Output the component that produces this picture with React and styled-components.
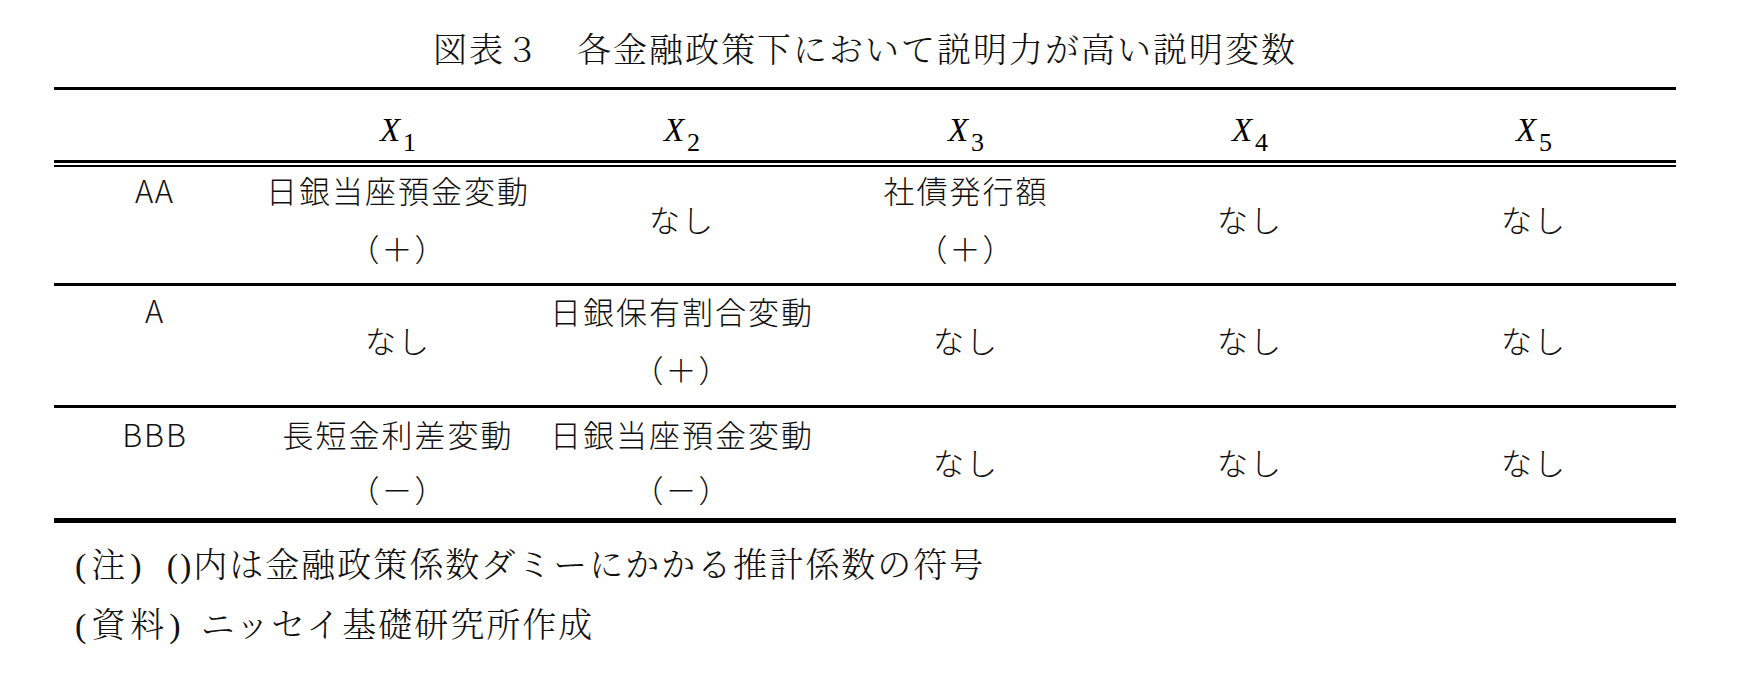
import React from "react";
import styled, { createGlobalStyle } from "styled-components";

const GlobalStyle = createGlobalStyle`
  html, body {
    margin: 0;
    padding: 0;
    background: #fff;
  }
  body {
    color: #111;
    font-family: "Noto Sans CJK JP", "Noto Sans", sans-serif;
  }
`;

const Page = styled.div`
  width: 1622px;
  padding: 28px 0 0 54px;
`;

const serif = `"Liberation Serif", "Noto Serif CJK JP", "Noto Sans CJK JP", serif`;

const Title = styled.h1`
  margin: 0 0 13px;
  font-family: ${serif};
  font-size: 34px;
  font-weight: 300;
  line-height: 46px;
  letter-spacing: 2px;
  text-align: center;
`;

const Table = styled.div`
  border-top: 3px solid #000;
  border-bottom: 5px solid #000;
`;

const Grid = styled.div`
  display: grid;
  grid-template-columns: 202px repeat(5, 284px);
`;

const HeaderRow = styled(Grid)`
  height: 70px;
  border-bottom: 3px solid #000;
`;

const HeaderCell = styled.div`
  display: flex;
  align-items: center;
  justify-content: center;
  padding-top: 9px;
`;

const Var = styled.span`
  font-family: "Liberation Serif", "DejaVu Serif", serif;
  font-size: 33px;
  font-style: italic;
  line-height: 50px;
  color: #000;
`;

const Sub = styled.sub`
  margin-left: 3px;
  font-size: 26px;
  font-style: normal;
  line-height: 0;
  vertical-align: -10px;
`;

const Body = styled.div`
  margin-top: 2px;
  border-top: 2px solid #000;
`;

const Row = styled(Grid)`
  grid-template-rows: ${(p) => p.$h}px;
  line-height: ${(p) => p.$line}px;
  font-size: 31px;
  font-weight: 300;
  letter-spacing: 2px;
  & + & {
    border-top: 3px solid #000;
  }
`;

const Label = styled.div`
  align-self: start;
  margin-top: ${(p) => -p.$shift / 2}px;
  text-align: center;
`;

const Cell = styled.div`
  display: flex;
  flex-direction: column;
  align-items: center;
  justify-content: center;
  min-height: 0;
  padding-bottom: ${(p) => p.$shift}px;
  white-space: nowrap;
`;

const Notes = styled.div`
  margin-top: 13px;
  padding-left: 21px;
  font-family: ${serif};
  font-size: 34px;
  font-weight: 300;
  line-height: 60px;
  letter-spacing: 2px;
`;

const NoteLine = styled.div`
  display: flex;
`;

const NoteTag = styled.span`
  margin-right: ${(p) => p.$gap}px;
  letter-spacing: 5px;
`;

const headers = [1, 2, 3, 4, 5];

const rows = [
  {
    label: "AA",
    h: 116,
    line: 58,
    shift: 12,
    cells: [["日銀当座預金変動", "（＋）"], ["なし"], ["社債発行額", "（＋）"], ["なし"], ["なし"]],
  },
  {
    label: "A",
    h: 119,
    line: 58,
    shift: 11,
    cells: [["なし"], ["日銀保有割合変動", "（＋）"], ["なし"], ["なし"], ["なし"]],
  },
  {
    label: "BBB",
    h: 110,
    line: 55,
    shift: 4,
    cells: [["長短金利差変動", "（－）"], ["日銀当座預金変動", "（－）"], ["なし"], ["なし"], ["なし"]],
  },
];

const notes = [
  { tag: "(注)", gap: 20, text: "()内は金融政策係数ダミーにかかる推計係数の符号" },
  { tag: "(資料)", gap: 15, text: "ニッセイ基礎研究所作成" },
];

const App = () => (
  <>
    <GlobalStyle />
    <Page>
      <Title>図表３　各金融政策下において説明力が高い説明変数</Title>
      <Table>
        <HeaderRow>
          <HeaderCell />
          {headers.map((n) => (
            <HeaderCell key={n}>
              <Var>
                X<Sub>{n}</Sub>
              </Var>
            </HeaderCell>
          ))}
        </HeaderRow>
        <Body>
          {rows.map((r) => (
            <Row key={r.label} $h={r.h} $line={r.line}>
              <Label $shift={r.shift}>{r.label}</Label>
              {r.cells.map((lines, i) => (
                <Cell key={i} $shift={r.shift}>
                  {lines.map((t) => (
                    <span key={t}>{t}</span>
                  ))}
                </Cell>
              ))}
            </Row>
          ))}
        </Body>
      </Table>
      <Notes>
        {notes.map((n) => (
          <NoteLine key={n.tag}>
            <NoteTag $gap={n.gap}>{n.tag}</NoteTag>
            <span>{n.text}</span>
          </NoteLine>
        ))}
      </Notes>
    </Page>
  </>
);

export default App;
